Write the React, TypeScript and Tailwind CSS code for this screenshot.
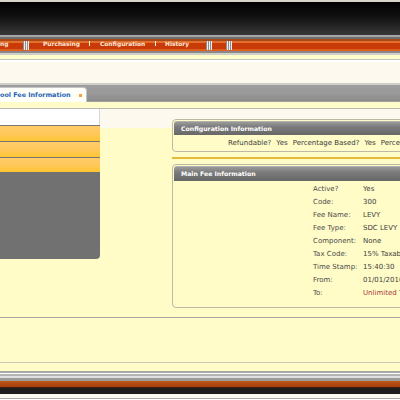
export default function App() {
  const rows: [string, string, boolean?][] = [
    ["Active?", "Yes"],
    ["Code:", "300"],
    ["Fee Name:", "LEVY"],
    ["Fee Type:", "SDC LEVY"],
    ["Component:", "None"],
    ["Tax Code:", "15% Taxable"],
    ["Time Stamp:", "15:40:30"],
    ["From:", "01/01/2010"],
    ["To:", "Unlimited Time", true],
  ];
  const grip =
    "w-[6px] h-[9px] shrink-0 self-center bg-[repeating-linear-gradient(90deg,#8e8e8e_0,#8e8e8e_1px,#ececec_1px,#ececec_2px)]";
  const tick = "w-[1px] h-[5px] shrink-0 self-start mt-[2px] bg-[#fff0e0]";
  const navText = "shrink-0 text-[5.9px] font-bold text-[#ffe6d6] whitespace-nowrap leading-none";
  const orange = "h-[15px] bg-[linear-gradient(#ffcb68,#ffc85a_55%,#ffc52e)]";
  const headerBase =
    "mx-[1px] mt-[1px] rounded-t-[3px] bg-[linear-gradient(#9a9a9a,#7a7a7a_40%,#676767)] border-t border-[#b0b0b0] flex items-center pl-[7px] text-[6.2px] font-bold text-white whitespace-nowrap";
  return (
    <div className="w-[400px] h-[400px] overflow-hidden bg-white font-['DejaVu_Sans',sans-serif]">
      <div className="h-[2px] bg-[#d6d3cb]" />
      <div className="h-[33px] bg-[linear-gradient(#000,#111_45%,#383838)]" />
      <div className="h-[2px] bg-[#a8a8a8]" />
      <div className="h-[2px] bg-[#6e6e6e]" />
      {/* nav bar */}
      <div className="h-[12px] flex items-center bg-[linear-gradient(#a64a1c_0,#a64a1c_2px,#e46e2c_2px,#e46e2c_4px,#c83a08_4px,#c83a08_10px,#e05e1c_10px)]">
        <div className={`w-[23px] ${navText}`}>ng</div>
        <div className={grip} />
        <div className="w-[14px] shrink-0" />
        <div className={`w-[46px] ${navText}`}>Purchasing</div>
        <div className={tick} />
        <div className="w-[10px] shrink-0" />
        <div className={`w-[55px] ${navText}`}>Configuration</div>
        <div className={tick} />
        <div className="w-[9px] shrink-0" />
        <div className={`w-[41px] ${navText}`}>History</div>
        <div className={grip} />
        <div className="w-[14px] shrink-0" />
        <div className={grip} />
      </div>
      <div className="h-[2px] bg-[#8a8a8a]" />
      <div className="h-[2px] bg-[#d0d0c8]" />
      <div className="h-[4px] bg-[#ffffcc]" />
      <div className="h-[1px] bg-[#c4c4bc]" />
      <div className="h-[2px] bg-white" />
      <div className="h-[21px] bg-[#fdf9ee]" />
      <div className="h-[2px] bg-[#cfcfc8]" />
      {/* tab bar */}
      <div className="h-[17px] flex bg-[linear-gradient(#9e9e9e,#999_50%,#8a8a8a)]">
        <div className="shrink-0 self-end h-[15px] w-[87px] bg-[#fffffa] rounded-tr-[4px] border-r border-t border-[#c4c4c4] flex items-center justify-between pr-[4px]">
          <span className="text-[6.4px] font-bold text-[#2462b4] whitespace-nowrap leading-none">
            ool Fee Information
          </span>
          <span className="w-[3px] h-[3px] bg-[#f6a232]" />
        </div>
        <div className="flex-1 self-end h-[1px] bg-[#a0a0a0]" />
      </div>
      <div className="h-[6px] bg-[#fffcca]" />
      <div className="h-[1px] bg-[#b8b8b4]" />
      {/* main area */}
      <div className="h-[208px] flex bg-[#fffcc8]">
        <div className="w-[100px] shrink-0 flex flex-col">
          <div className="h-[16px] bg-white border-r border-[#d8d8d0]" />
          <div className="h-[1px] bg-[#777]" />
          <div className={orange} />
          <div className="h-[1px] bg-[#777]" />
          <div className={orange} />
          <div className="h-[1px] bg-[#777]" />
          <div className="h-[14px] bg-[linear-gradient(#ffcb68,#ffc85a_55%,#ffc52e)]" />
          <div className="h-[87px] bg-[#717171] rounded-br-[4px]" />
        </div>
        <div className="flex-1 min-w-0 pl-[72px] pt-[10px] bg-[linear-gradient(#fdf9ee_0,#fdf9ee_19px,#fffcc8_19px)]">
          {/* config panel */}
          <div className="w-[260px] h-[33px] flex flex-col border border-[#bdb9a4] rounded-[4px] bg-[#fffcc8]">
            <div className={`h-[14px] ${headerBase}`}>Configuration Information</div>
            <div className="flex-1 flex items-center pl-[55px] gap-[5px] text-[7px] text-[#3a3a3a] whitespace-nowrap leading-none">
              <span>Refundable?</span>
              <span>Yes</span>
              <span>Percentage Based?</span>
              <span>Yes</span>
              <span>Percentage:</span>
            </div>
          </div>
          <div className="mt-[5px] h-[2px] w-[260px] bg-[#e2bb3c]" />
          {/* main fee panel */}
          <div className="mt-[5px] w-[260px] h-[144px] border border-[#bdb9a4] rounded-[4px] bg-[#fffcc8]">
            <div className={`h-[15px] ${headerBase}`}>Main Fee Information</div>
            <div className="pt-[2px] pl-[140px] text-[7px] leading-[13px] whitespace-nowrap">
              {rows.map(([l, v, red]) => (
                <div key={l} className="flex h-[13px]">
                  <span className="w-[50px] shrink-0 text-[#4a4a4a]">{l}</span>
                  <span className={red ? "text-[#a83a3a]" : "text-[#3c3c3c]"}>{v}</span>
                </div>
              ))}
            </div>
          </div>
        </div>
      </div>
      <div className="h-[1px] bg-[#a8a8a0]" />
      <div className="h-[44px] bg-[#fffcca]" />
      <div className="h-[1px] bg-[#c8c8b4]" />
      <div className="h-[8px] bg-[#fffcca]" />
      {/* footer */}
      <div className="h-[2px] bg-[#a8a8a8]" />
      <div className="h-[1px] bg-white" />
      <div className="h-[2px] bg-[#b4b4b4]" />
      <div className="h-[2px] bg-[#e0e0e0]" />
      <div className="h-[3px] bg-[#9a9a9a]" />
      <div className="h-[6px] bg-[linear-gradient(#c05818,#a23c0c)]" />
      <div className="h-[1px] bg-[#4a1a08]" />
      <div className="h-[6px] bg-[#1c1c1c]" />
      <div className="h-[4px] bg-[#f8f8f0]" />
      <div className="h-[1px] bg-[#aaa]" />
      <div className="h-[2px] bg-white" />
    </div>
  );
}
